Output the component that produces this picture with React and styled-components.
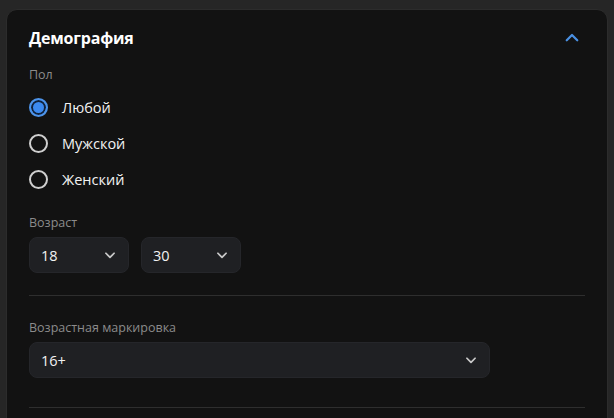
import React, { useState } from "react";
import styled, { createGlobalStyle } from "styled-components";

const Global = createGlobalStyle`
  html, body { margin: 0; padding: 0; background: #262626; }
  body { font-family: "Open Sans", "Noto Sans", sans-serif; color: #f2f2f2; }
  * { box-sizing: border-box; }
`;

const Page = styled.div`
  padding: 9px 6px 0 6px;
  height: 418px;
  overflow: hidden;
`;

const Card = styled.section`
  background: #121212;
  border: 1px solid #2c2c2c;
  border-radius: 11px;
  padding: 16px 22px 40px 22px;
`;

const Header = styled.div`
  display: flex;
  align-items: center;
  justify-content: space-between;
  height: 24px;
  margin-bottom: 16px;
`;

const Title = styled.h2`
  margin: 0;
  font-size: 16px;
  font-weight: 700;
  color: #ffffff;
  letter-spacing: -0.2px;
`;

const Toggle = styled.button`
  background: none;
  border: none;
  padding: 0;
  margin-right: 4px;
  display: flex;
  cursor: pointer;
`;

const Label = styled.div`
  font-size: 12.5px;
  line-height: 18px;
  color: #8b8b8b;
  margin-bottom: 5px;
`;

const RadioList = styled.div`
  display: flex;
  flex-direction: column;
  margin-bottom: 17px;
`;

const RadioRow = styled.label`
  display: flex;
  align-items: center;
  height: 36px;
  gap: 14px;
  cursor: pointer;
  font-size: 14.5px;
  color: #f2f2f2;
`;

const RadioCircle = styled.span`
  width: 19px;
  height: 19px;
  border-radius: 50%;
  border: 2px solid ${(p) => (p.$checked ? "#4d94ea" : "#cfcfcf")};
  background: ${(p) => (p.$checked ? "#3c8af0" : "transparent")};
  box-shadow: ${(p) => (p.$checked ? "inset 0 0 0 2px #10223c" : "none")};
  flex: none;
`;

const SelectRow = styled.div`
  display: flex;
  gap: 12px;
`;

const Select = styled.div`
  width: ${(p) => p.$width}px;
  height: 36px;
  background: #1f2023;
  border: 1px solid #25262a;
  border-radius: 8px;
  display: flex;
  align-items: center;
  justify-content: space-between;
  padding: 0 11px 0 11px;
  font-size: 14.5px;
  color: #f2f2f2;
`;

const Divider = styled.hr`
  border: none;
  border-top: 1px solid #2e2e2e;
  margin: ${(p) => p.$margin};
`;

const Chevron = ({ up, color = "#c9c9c9", size = 14 }) => (
  <svg width={size} height={size} viewBox="0 0 24 24" fill="none">
    <path
      d={up ? "M5 15l7-7 7 7" : "M5 9l7 7 7-7"}
      stroke={color}
      strokeWidth="3"
      strokeLinecap="round"
      strokeLinejoin="round"
    />
  </svg>
);

export default function App() {
  const [gender, setGender] = useState("any");
  const options = [
    ["any", "Любой"],
    ["male", "Мужской"],
    ["female", "Женский"],
  ];
  return (
    <>
      <Global />
      <Page>
        <Card>
          <Header>
            <Title>Демография</Title>
            <Toggle aria-label="Свернуть">
              <Chevron up color="#4a90e2" size={18} />
            </Toggle>
          </Header>
          <Label>Пол</Label>
          <RadioList>
            {options.map(([v, t]) => (
              <RadioRow key={v} onClick={() => setGender(v)}>
                <RadioCircle $checked={gender === v} />
                {t}
              </RadioRow>
            ))}
          </RadioList>
          <Label>Возраст</Label>
          <SelectRow>
            <Select $width={100}>
              18
              <Chevron />
            </Select>
            <Select $width={100}>
              30
              <Chevron />
            </Select>
          </SelectRow>
          <Divider $margin="22px 0 23px 0" />
          <Label>Возрастная маркировка</Label>
          <Select $width={461}>
            16+
            <Chevron />
          </Select>
          <Divider $margin="29px 0 0 0" />
        </Card>
      </Page>
    </>
  );
}
